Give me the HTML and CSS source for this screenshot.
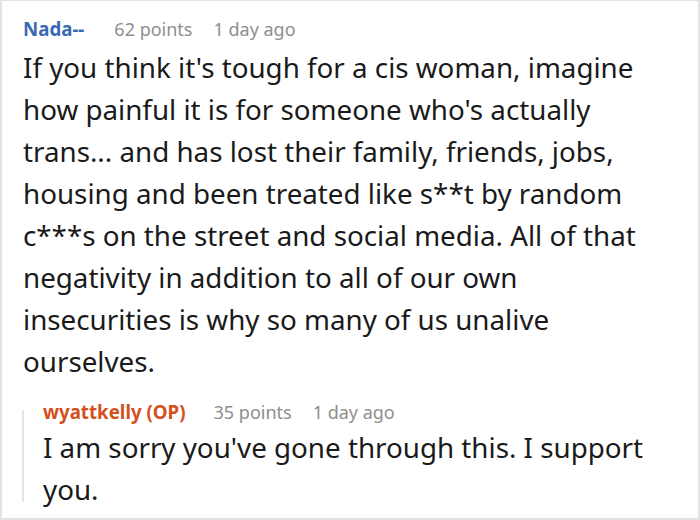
FILE: index.html
```html
<!DOCTYPE html>
<html>
<head>
<meta charset="utf-8">
<link rel="stylesheet" href="styles.css">
</head>
<body>
<div class="frame">
  <div class="comment">
    <div class="meta">
      <span class="author">Nada--</span>
      <span class="info">62 points</span>
      <span class="info">1 day ago</span>
    </div>
    <p class="text">If you think it's tough for a cis woman, imagine how painful it is for someone who's actually trans... and has lost their family, friends, jobs, housing and been treated like s**t by random c***s on the street and social media. All of that negativity in addition to all of our own insecurities is why so many of us unalive ourselves.</p>
    <div class="reply">
      <div class="bar"></div>
      <div class="reply-body">
        <div class="meta">
          <span class="author op">wyattkelly (OP)</span>
          <span class="info">35 points</span>
          <span class="info">1 day ago</span>
        </div>
        <p class="text">I am sorry you've gone through this. I support you.</p>
      </div>
    </div>
  </div>
</div>
</body>
</html>
```
FILE: styles.css
```css
html, body {
  margin: 0;
  padding: 0;
  background: #fff;
}
.frame {
  width: 700px;
  height: 520px;
  box-sizing: border-box;
  border: 2px solid #e3e3e3;
  border-top-width: 1px;
  overflow: hidden;
  font-family: "Noto Sans", sans-serif;
}
.comment {
  padding: 16px 30px 0 21px;
}
.meta {
  display: flex;
  align-items: baseline;
  font-size: 18px;
  line-height: 24px;
}
.author {
  font-size: 18.7px;
  font-weight: 700;
  color: #3a6ab4;
  margin-right: 30px;
}
.author.op {
  color: #d4501c;
  margin-right: 28px;
}
.info {
  color: #8e8e8e;
  margin-right: 21px;
}
.text {
  margin: 5px 0 0;
  font-size: 27.75px;
  line-height: 42px;
  color: #1a1a1a;
}
.reply {
  display: flex;
  margin-top: 18px;
  margin-left: -1px;
}
.bar {
  width: 2px;
  flex: none;
  background: #e4e4e4;
  margin: 10px 0 8px;
}
.reply-body {
  padding-left: 19px;
}
.reply-body .text {
  margin-top: 2px;
}
```
